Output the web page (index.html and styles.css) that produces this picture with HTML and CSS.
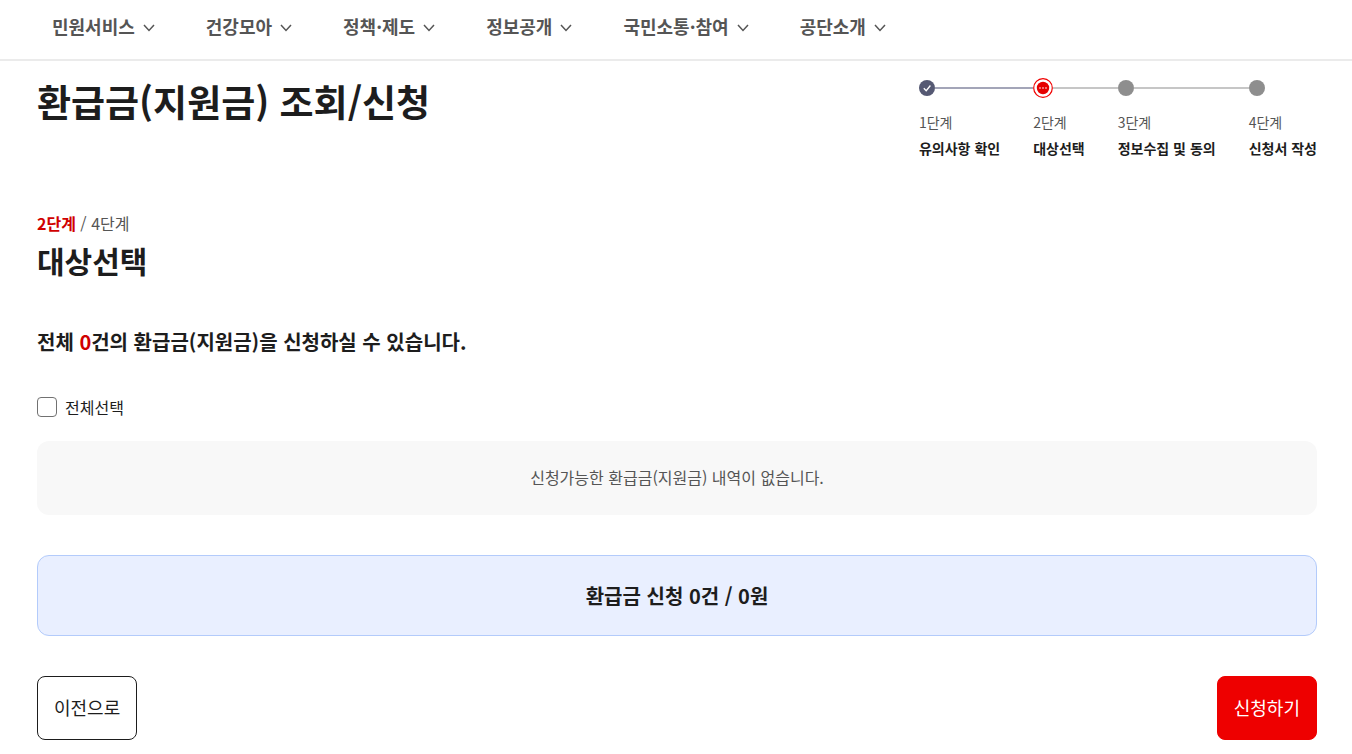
FILE: index.html
```html
<!DOCTYPE html>
<html lang="ko">
<head>
<meta charset="UTF-8">
<meta name="viewport" content="width=device-width, initial-scale=1.0">
<title>환급금(지원금) 조회/신청</title>
<link rel="stylesheet" href="styles.css">
</head>
<body>
<header class="header">
  <nav class="gnb">
    <button type="button">민원서비스 <svg viewBox="0 0 12 8"><path d="M1 1l5 5.5L11 1"/></svg></button>
    <button type="button">건강모아 <svg viewBox="0 0 12 8"><path d="M1 1l5 5.5L11 1"/></svg></button>
    <button type="button">정책·제도 <svg viewBox="0 0 12 8"><path d="M1 1l5 5.5L11 1"/></svg></button>
    <button type="button">정보공개 <svg viewBox="0 0 12 8"><path d="M1 1l5 5.5L11 1"/></svg></button>
    <button type="button">국민소통·참여 <svg viewBox="0 0 12 8"><path d="M1 1l5 5.5L11 1"/></svg></button>
    <button type="button">공단소개 <svg viewBox="0 0 12 8"><path d="M1 1l5 5.5L11 1"/></svg></button>
  </nav>
</header>

<main class="container">
  <div class="page-head">
    <h1>환급금(지원금) 조회/신청</h1>
    <ol class="steps">
      <li class="done">
        <div class="marker">
          <svg width="16" height="16" viewBox="0 0 16 16"><circle cx="8" cy="8" r="8" fill="#555973"/><path d="M4.8 8.2l2.4 2.5L11.4 5.5" fill="none" stroke="#fff" stroke-width="1.3"/></svg>
        </div>
        <span class="step-no">1단계</span>
        <strong>유의사항 확인</strong>
      </li>
      <li class="current" aria-current="step">
        <div class="marker">
          <svg width="20" height="20" viewBox="0 0 20 20"><circle cx="10" cy="10" r="9.3" fill="#fff" stroke="#f00000" stroke-width="1.2"/><circle cx="10" cy="10" r="6.2" fill="#e60000"/><g fill="#fff"><circle cx="7" cy="10" r="0.8"/><circle cx="10" cy="10" r="0.8"/><circle cx="13" cy="10" r="0.8"/></g></svg>
        </div>
        <span class="step-no">2단계</span>
        <strong>대상선택</strong>
      </li>
      <li>
        <div class="marker"><span class="dot"></span></div>
        <span class="step-no">3단계</span>
        <strong>정보수집 및 동의</strong>
      </li>
      <li>
        <div class="marker"><span class="dot"></span></div>
        <span class="step-no">4단계</span>
        <strong>신청서 작성</strong>
      </li>
    </ol>
  </div>

  <p class="step-count"><strong>2단계</strong> / 4단계</p>
  <h2>대상선택</h2>

  <h3>전체 <em>0</em>건의 환급금(지원금)을 신청하실 수 있습니다.</h3>

  <div class="check-all">
    <input type="checkbox" id="checkAll">
    <label for="checkAll">전체선택</label>
  </div>

  <p class="empty">신청가능한 환급금(지원금) 내역이 없습니다.</p>
  <p class="total">환급금 신청 0건 / 0원</p>

  <div class="buttons">
    <button type="button" class="btn">이전으로</button>
    <button type="button" class="btn btn-primary">신청하기</button>
  </div>
</main>
</body>
</html>
```

FILE: styles.css
```css
* {
  box-sizing: border-box;
}

body {
  margin: 0;
  font-family: "Noto Sans CJK KR", sans-serif;
  font-size: 16px;
  line-height: 24px;
  color: #1d1d1d;
  background-color: #ffffff;
}

h1, h2, h3, p, ol {
  margin: 0;
  padding: 0;
}

button {
  font-family: inherit;
  cursor: pointer;
}

.header {
  border-bottom: 2px solid #ebebeb;
}

.gnb {
  display: flex;
  gap: 19px;
  padding: 10px 36px 17px;
}

.gnb button {
  display: flex;
  align-items: center;
  gap: 8px;
  padding: 0 16px;
  border: none;
  background: none;
  font-size: 18px;
  font-weight: bold;
  line-height: 32px;
  color: #555555;
}

.gnb svg {
  width: 12px;
  height: 8px;
  margin-top: 4px;
  fill: none;
  stroke: #555555;
  stroke-width: 1.5;
}

.container {
  padding: 14px 35px 14px 37px;
}

.page-head {
  display: flex;
  justify-content: space-between;
  margin-bottom: 50px;
}

h1 {
  font-size: 37px;
  line-height: 52px;
}

.steps {
  display: flex;
  padding-top: 3px;
  list-style: none;
  font-size: 14px;
  line-height: 26px;
}

.steps li:not(:last-child) strong {
  margin-right: 33px;
}

.steps strong,
.step-no {
  display: block;
}

.step-no {
  color: #555555;
}

.marker {
  display: flex;
  align-items: center;
  height: 20px;
  margin-bottom: 11px;
}

.steps li:not(:last-child) .marker::after {
  content: "";
  flex: 1;
  height: 2px;
  background-color: #c6c6c6;
}

.steps .done:not(:last-child) .marker::after {
  background-color: #a3a5b8;
}

.dot {
  width: 16px;
  height: 16px;
  border-radius: 50%;
  background-color: #8e8e8e;
}

.step-count {
  margin-bottom: 4px;
  color: #555555;
}

.step-count strong,
h3 em {
  font-style: normal;
  color: #d00000;
}

h2 {
  margin-bottom: 46px;
  font-size: 30px;
  line-height: 42px;
}

h3 {
  margin-bottom: 38px;
  font-size: 20px;
  line-height: 30px;
}

.check-all {
  display: flex;
  align-items: center;
  gap: 8px;
  margin-bottom: 22px;
}

.check-all input {
  appearance: none;
  width: 20px;
  height: 20px;
  margin: 0;
  border: 1px solid #717171;
  border-radius: 4px;
  background-color: #ffffff;
}

.check-all input:checked {
  background-color: #555973;
}

.empty,
.total {
  margin-bottom: 40px;
  border-radius: 12px;
  text-align: center;
}

.empty {
  padding: 24px 24px 26px;
  background-color: #f8f8f8;
  color: #555555;
}

.total {
  padding: 24px;
  border: 1px solid #b3cbfb;
  background-color: #e9efff;
  font-size: 20px;
  font-weight: bold;
  line-height: 31px;
}

.buttons {
  display: flex;
  justify-content: space-between;
}

.btn {
  min-width: 100px;
  height: 64px;
  padding: 0 16px 2px;
  border: 1px solid #1d1d1d;
  border-radius: 8px;
  background-color: #ffffff;
  font-size: 18px;
  color: #1d1d1d;
}

.btn-primary {
  border-color: #ee0000;
  background-color: #ee0000;
  color: #ffffff;
}
```
